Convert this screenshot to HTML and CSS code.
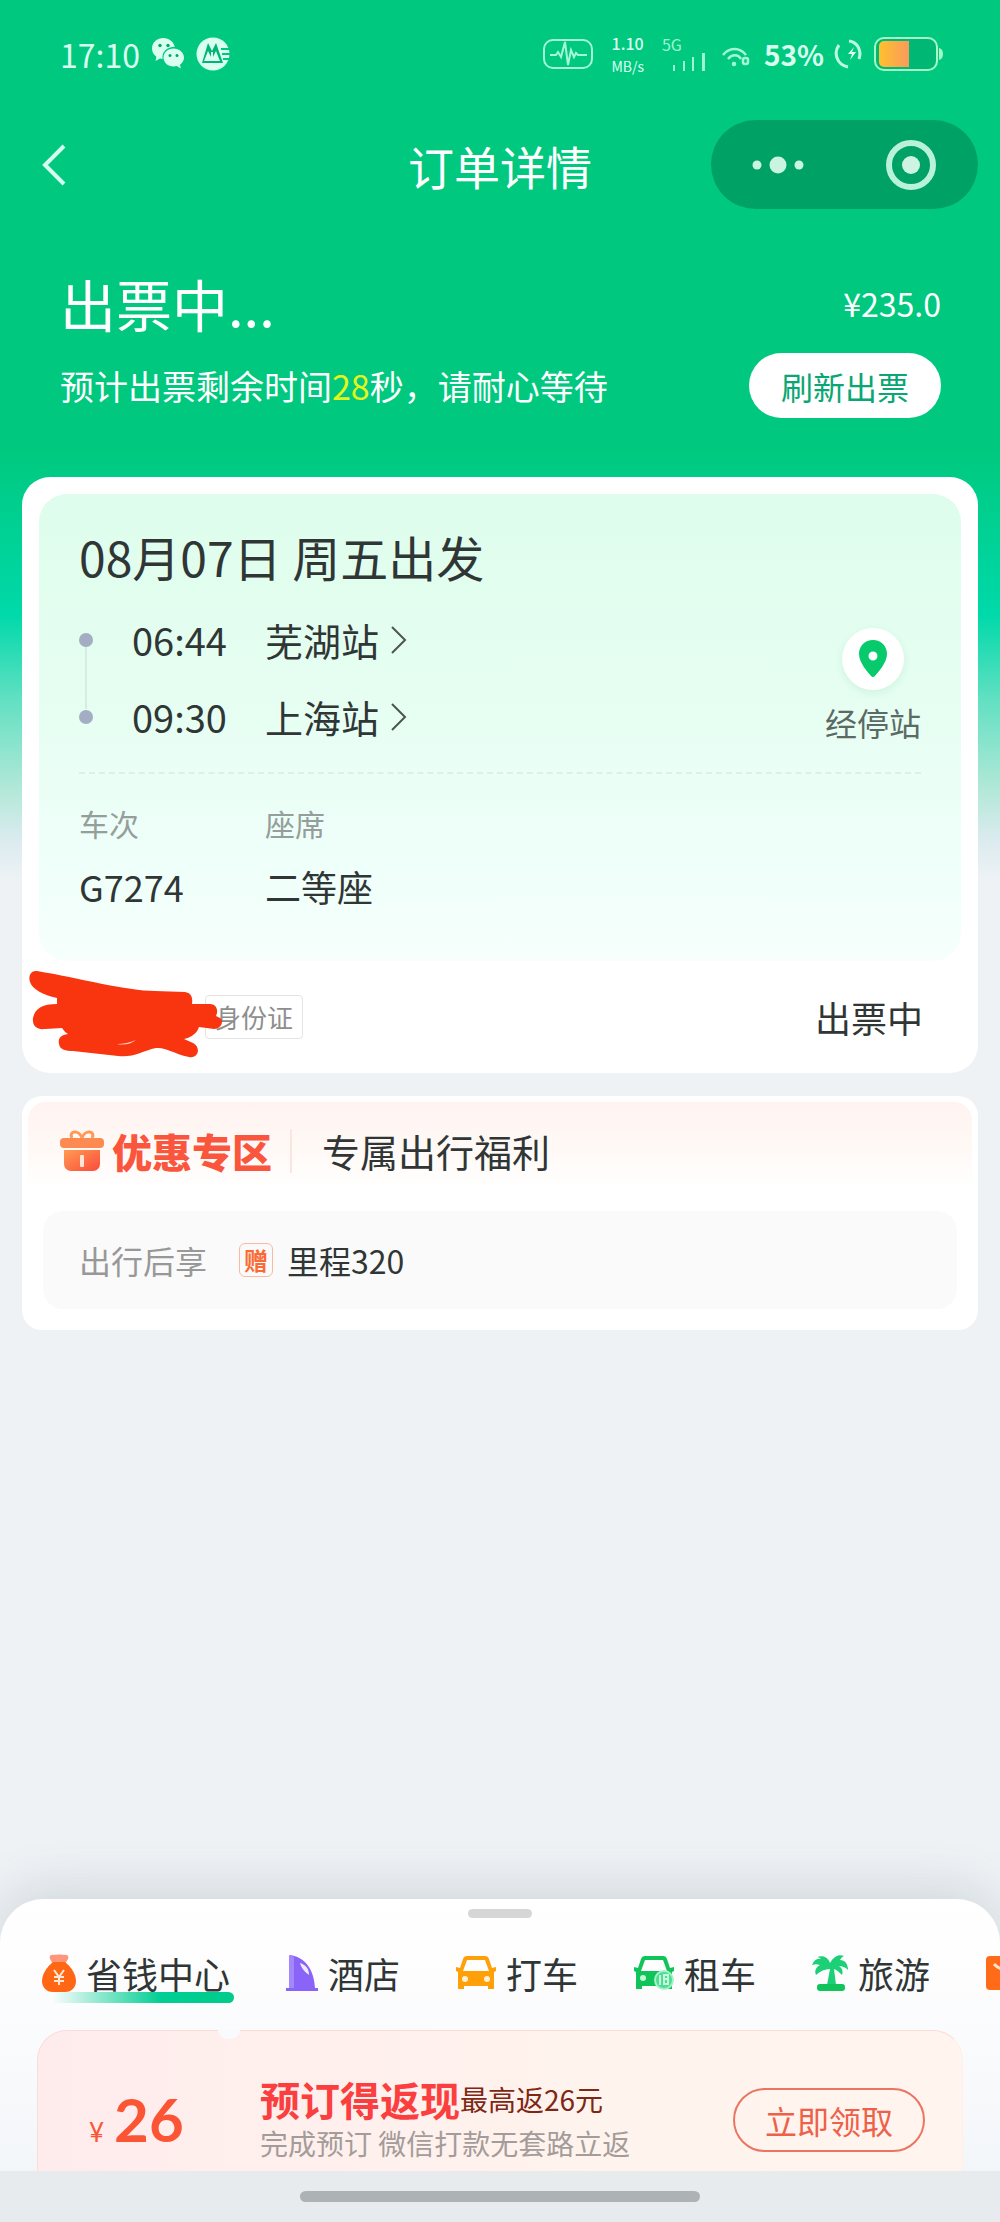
FILE: index.html
```html
<!DOCTYPE html>
<html lang="zh-CN">
<head>
    <meta charset="UTF-8">
    <meta name="viewport" content="width=device-width, initial-scale=1.0">
    <title>订单详情</title>
    <link rel="stylesheet" href="styles.css">
</head>
<body>
    <div class="status-bar">
        <span class="status-time">17:10</span>
        <svg class="status-app" width="34" height="34" viewBox="0 0 34 34">
            <path fill="#d9fff0" d="M12.500 1C6 1 1 5.500 1 11.500c0 3.500 1.700 6.300 4.400 8.200L4.500 24l4.600-2.400c.8.200 1.600.3 2.500.4C10.500 15 16 9.800 23.800 9.800 22.500 4.500 18 1 12.500 1z"/>
            <path fill="#d9fff0" d="M22.500 11.500c-5.700 0-10 4-10 9s4.300 9 10 9c1.200 0 2.300-.2 3.300-.5l4 2.500-.8-3.800c2.400-1.700 4-4.200 4-7.200 0-5-4.800-9-10.500-9z"/>
            <g fill="#00a868"><circle cx="9" cy="8.500" r="1.700"/><circle cx="17" cy="8.500" r="1.700"/><circle cx="19" cy="18.500" r="1.500"/><circle cx="26" cy="18.500" r="1.500"/></g>
        </svg>
        <svg class="status-app" width="34" height="34" viewBox="0 0 34 34">
            <circle cx="17" cy="17" r="16.500" fill="#d9fff0"/>
            <path fill="#00b474" d="M12 6l4 8 4-8 7 20H6z"/>
            <path fill="#d9fff0" d="M12 14l4 8 4-8 4 10H8z"/>
            <path fill="none" stroke="#d9fff0" stroke-width="2" d="M16 15v9"/>
            <path fill="none" stroke="#00c77e" stroke-width="2" d="M25 12h9M26 17h8M27 22h7"/>
        </svg>
        <div class="status-right">
            <svg width="50" height="30" viewBox="0 0 50 30" fill="none" stroke="#a5f8d4" stroke-width="2">
                <rect x="1" y="1" width="48" height="28" rx="9"/>
                <path d="M7 16h6l2-3 3 5 4-15 3 23 3-15 3 7 2-4 2 2h9"/>
            </svg>
            <div class="net-speed"><b>1.10</b><span>MB/s</span></div>
            <div class="signal">
                <span>5G</span>
                <svg width="34" height="20" viewBox="0 0 34 20" fill="#9ff5cf">
                    <rect x="1" y="13" width="2" height="6"/><rect x="11" y="9" width="2" height="10"/><rect x="20" y="5" width="2" height="14"/><rect x="30" y="1" width="3" height="18"/>
                </svg>
            </div>
            <svg class="wifi" width="28" height="20" viewBox="0 0 28 20" fill="none" stroke="#a5f8d4" stroke-width="2.500">
                <path d="M1 8C7 0 18 0 24 8M6 12c4-5 10-5 13 0"/>
                <circle cx="12" cy="17" r="1"/><rect x="21" y="11" width="5" height="6" rx="2"/>
            </svg>
            <b class="battery-text">53%</b>
            <svg width="30" height="30" viewBox="0 0 30 30" fill="none" stroke="#bdfbe0" stroke-width="3">
                <path d="M15 2c8 1 13 9 10 18" /><path d="M5 6C-1 14 3 26 14 28"/>
                <path d="M20 8l-6 7h4l-2 6 6-8h-4z" fill="#e2fff3" stroke="none"/>
            </svg>
            <svg width="70" height="34" viewBox="0 0 70 34">
                <defs>
                    <linearGradient id="charge"><stop offset="0" stop-color="#ffc02e"/><stop offset="1" stop-color="#f99a5c"/></linearGradient>
                </defs>
                <rect x="1" y="1" width="62" height="32" rx="9" fill="#00b873" stroke="#a5f8c8" stroke-width="2"/>
                <path d="M10 4h25v26H10a5 5 0 0 1-5-5V9a5 5 0 0 1 5-5z" fill="url(#charge)"/>
                <path d="M65 11q4 1 4 6t-4 6z" fill="#a5f8c8"/>
            </svg>
        </div>
    </div>

    <header class="nav">
        <a href="#" class="back" aria-label="返回">
            <svg width="24" height="42" viewBox="0 0 24 42" fill="none" stroke="#d5fff0" stroke-width="4"><path d="M22 2L3 21l19 19"/></svg>
        </a>
        <h1>订单详情</h1>
        <div class="capsule">
            <button type="button" aria-label="更多">
                <svg width="52" height="18" viewBox="0 0 52 18" fill="#c8f4e0"><circle cx="5" cy="9" r="4.500"/><circle cx="26" cy="9" r="8.500"/><circle cx="47" cy="9" r="4.500"/></svg>
            </button>
            <button type="button" aria-label="关闭">
                <svg width="50" height="50" viewBox="0 0 50 50"><circle cx="25" cy="25" r="22" fill="none" stroke="#b9f2da" stroke-width="6"/><circle cx="25" cy="25" r="9" fill="#cdf3e3"/></svg>
            </button>
        </div>
    </header>

    <section class="hero">
        <div class="hero-row">
            <h2>出票中...</h2>
            <span class="price">¥235.0</span>
        </div>
        <div class="hero-row">
            <p>预计出票剩余时间<em>28</em>秒，请耐心等待</p>
            <button type="button" class="refresh">刷新出票</button>
        </div>
    </section>

    <main>
        <section class="card ticket">
            <div class="trip">
                <h3>08月07日 周五出发</h3>
                <div class="route">
                    <ul class="stops">
                        <li><time>06:44</time><a href="#">芜湖站<svg width="16" height="28" viewBox="0 0 16 28"><path d="M1 1l13 13L1 27"/></svg></a></li>
                        <li><time>09:30</time><a href="#">上海站<svg width="16" height="28" viewBox="0 0 16 28"><path d="M1 1l13 13L1 27"/></svg></a></li>
                    </ul>
                    <a href="#" class="via">
                        <span class="via-icon">
                            <svg width="30" height="38" viewBox="0 0 30 38"><path fill="#06ca6b" fill-rule="evenodd" d="M15 0C7 0 1 6 1 14c0 9 9 18 12 22q2 2 4 0c3-4 12-13 12-22C29 6 23 0 15 0zm0 11.500a4.500 4.500 0 1 1 0 9 4.500 4.500 0 0 1 0-9z"/></svg>
                        </span>
                        经停站
                    </a>
                </div>
                <dl class="train">
                    <div><dt>车次</dt><dd>G7274</dd></div>
                    <div><dt>座席</dt><dd>二等座</dd></div>
                </dl>
            </div>
            <div class="passenger">
                <span class="id-tag">身份证</span>
                <svg class="scribble" width="196" height="90" viewBox="0 0 196 90">
                    <path fill="#f93510" d="M8 1C2 0-1 6 1 12c2 7 13 13 27 16v6C14 34 6 38 4 48c-1 8 4 12 12 11l17-1c2 3 4 5 6 6-8 1-10 5-9 10 1 6 7 7 14 7l45 5c15 2 24-5 38-8 10-1 16 5 33 9 10 2 12-10 4-14l-9-4c8-2 13-6 15-12l15 2c8 0 10-9 6-11l-4-2c3-6 0-12-6-12h-18c1-7-1-11-7-12l-30-1C98 21 50 8 8 1z"/>
                    <path fill="#ffd9cf" d="M88 74q10 0 19-4-8 6-19 4z"/>
                </svg>
                <span class="passenger-state">出票中</span>
            </div>
        </section>

        <section class="card benefits">
            <div class="benefits-head">
                <svg width="44" height="42" viewBox="0 0 44 42">
                    <defs>
                        <linearGradient id="gift" x1="0" y1="0" x2="1" y2="1"><stop offset="0" stop-color="#ff9c52"/><stop offset="1" stop-color="#fb4a3c"/></linearGradient>
                    </defs>
                    <path d="M12 8C8 1 19-1 22 8 25-1 36 1 32 8" fill="none" stroke="#ff9958" stroke-width="3"/>
                    <rect x="0" y="8" width="44" height="10" rx="4" fill="#fd8a50"/>
                    <path d="M4 20h36v14a7 7 0 0 1-7 7H11a7 7 0 0 1-7-7z" fill="url(#gift)"/>
                    <rect x="20" y="25" width="4" height="12" rx="1" fill="#ffe6d9"/>
                </svg>
                <h3>优惠专区</h3>
                <p>专属出行福利</p>
            </div>
            <div class="benefit">
                <span class="when">出行后享</span>
                <span class="gift-tag">赠</span>
                <span>里程320</span>
            </div>
        </section>
    </main>

    <section class="sheet">
        <div class="grabber"></div>
        <nav class="tabs">
            <a href="#" class="active">
                <svg width="34" height="38" viewBox="0 0 34 38">
                    <path fill="#ff9579" d="M9 1q8-1 16 0 2 1 1 4l-3 5H11L8 5q-1-3 1-4z"/>
                    <path fill="#ff6714" d="M11 8h12c6 5 11 12 11 19 0 6-4 11-11 11H11C4 38 0 33 0 27 0 20 5 13 11 8z"/>
                    <path fill="none" stroke="#ffe9d6" stroke-width="2" d="M12 16l5 7 5-7M17 23v8M12 23h10M12 27h10"/>
                </svg>
                省钱中心
            </a>
            <a href="#">
                <svg width="32" height="36" viewBox="0 0 32 36">
                    <path fill="#8a63f8" d="M4 0c14 2 24 13 25 33h3v3H0v-3h4z"/><path fill="#a288fc" d="M3 0l5 2v31H3z"/>
                    <path fill="#f1ebff" d="M14 8c6 2 9 6 9 12-3-2-8-7-9-12z"/>
                </svg>
                酒店
            </a>
            <a href="#">
                <svg width="40" height="34" viewBox="0 0 40 34">
                    <path fill="#ffa008" fill-rule="evenodd" d="M11 0h18q3 0 4 3l3 9 4-1v4l-2 1v17h-6v-3H8v3H2V16l-2-1v-4l4 1 3-9q1-3 4-3zm0 4L7 15h26L29 4z"/>
                    <circle cx="9" cy="23" r="3" fill="#fff1d6"/><circle cx="31" cy="23" r="3" fill="#fff1d6"/>
                </svg>
                打车
            </a>
            <a href="#">
                <svg width="40" height="34" viewBox="0 0 40 34">
                    <path fill="#10c45a" fill-rule="evenodd" d="M11 0h18q3 0 4 3l3 9 4-1v4l-2 1v17h-6v-3H8v3H2V16l-2-1v-4l4 1 3-9q1-3 4-3zm0 4L7 15h26L29 4z"/>
                    <circle cx="9" cy="22" r="3" fill="#c9f7da"/>
                    <circle cx="30" cy="24" r="9" fill="#4fdc93" stroke="#a6f1c9" stroke-width="2"/>
                    <path fill="none" stroke="#c4f9db" stroke-width="2" d="M26 19v10M30 19h4v9h-4zM30 23h4"/>
                </svg>
                租车
            </a>
            <a href="#">
                <svg width="36" height="36" viewBox="0 0 36 36">
                    <path fill="#1bd077" d="M18 8C22 1 27-1 32 1c-2 1-3 2-4 4 5 0 8 4 8 10-3-3-6-4-9-4 4 3 4 6 3 9-3-3-5-5-8-6l2 16h-9l3-16C13 14 8 16 4 20 2 16 4 12 8 10c-3-1-5-1-8 0 2-5 5-7 9-6-1-1-2-2-4-2 6-2 11 0 13 6z"/>
                    <rect x="5" y="29" width="28" height="7" rx="3" fill="#0fc45b"/>
                </svg>
                旅游
            </a>
            <a href="#" aria-label="更多服务">
                <svg width="36" height="34" viewBox="0 0 36 34"><rect width="36" height="34" rx="4" fill="#ff6b16"/><path d="M8 8q9 10 20 0" fill="none" stroke="#ffe2cf" stroke-width="3"/><circle cx="22" cy="25" r="7" fill="#ff9c62"/></svg>
            </a>
        </nav>
        <div class="coupon">
            <div class="amount"><small>¥</small><b>26</b></div>
            <div class="coupon-text">
                <h3>预订得返现<small>最高返26元</small></h3>
                <p>完成预订 微信打款无套路立返</p>
            </div>
            <button type="button" class="claim">立即领取</button>
        </div>
    </section>
    <footer class="home-bar"><span></span></footer>
</body>
</html>
```
FILE: styles.css
```css
* {
    box-sizing: border-box;
}

body {
    margin: 0;
    min-height: 100vh;
    display: flex;
    flex-direction: column;
    overflow-x: hidden;
    font-family: "Noto Sans CJK SC", sans-serif;
    color: #2f3635;
    background: #eef2f5 linear-gradient(#00c97f 0, #00c97f 450px, #00d9aa 615px, #62e0c2 700px, #b3e8d8 790px, #dbebef 840px, #eef2f5 880px) no-repeat;
}

h1, h2, h3, p, ul, dl, dd {
    margin: 0;
    padding: 0;
    font-weight: 400;
}

a {
    color: inherit;
    text-decoration: none;
}

button {
    font-family: inherit;
    border: none;
    padding: 0;
    cursor: pointer;
}

svg {
    display: block;
    flex-shrink: 0;
}

/* status bar */
.status-bar {
    display: flex;
    align-items: center;
    height: 108px;
    padding: 0 56px 0 60px;
    color: #d9fff0;
}

.status-time {
    font-size: 32px;
    line-height: 40px;
}

.status-app {
    margin-left: 11px;
}

.status-right {
    display: flex;
    align-items: center;
    gap: 10px;
    margin-left: auto;
}

.net-speed {
    display: flex;
    flex-direction: column;
    align-items: center;
    gap: 4px;
    font-size: 14px;
    line-height: 18px;
    padding: 0 8px;
}

.net-speed b {
    font-size: 16px;
    line-height: 20px;
    font-weight: 500;
}

.signal {
    display: flex;
    flex-direction: column;
    font-size: 16px;
    line-height: 16px;
    color: #9ff5cf;
}

.signal svg {
    margin-left: 10px;
}

.wifi {
    margin: 6px 4px 0 6px;
}

.battery-text {
    font-size: 28px;
    line-height: 40px;
}

/* title bar */
.nav {
    display: grid;
    grid-template-columns: 1fr auto 1fr;
    align-items: center;
    margin-top: 12px;
    padding: 0 22px;
}

.nav h1 {
    font-size: 46px;
    line-height: 60px;
    color: #fff;
}

.back {
    justify-self: start;
    padding: 0 20px;
}

.capsule {
    justify-self: end;
    display: flex;
    align-items: center;
    width: 267px;
    height: 89px;
    border-radius: 45px;
    background: #00a165;
}

.capsule button {
    flex: 1;
    height: 100%;
    display: flex;
    align-items: center;
    justify-content: center;
    background: none;
}

/* order state */
.hero {
    display: flex;
    flex-direction: column;
    gap: 20px;
    padding: 64px 59px 59px 60px;
    color: #fff;
}

.hero-row {
    display: flex;
    align-items: center;
    justify-content: space-between;
}

.hero h2 {
    font-size: 56px;
    line-height: 60px;
}

.price {
    font-size: 32px;
}

.hero p {
    font-size: 34px;
    line-height: 44px;
}

.hero em {
    font-style: normal;
    color: #e3f51b;
}

.refresh {
    width: 192px;
    height: 65px;
    border-radius: 33px;
    background: #fff;
    color: #0aa673;
    font-size: 32px;
}

/* cards */
main {
    display: flex;
    flex-direction: column;
    gap: 23px;
    padding: 0 22px;
}

.card {
    background: #fff;
    border-radius: 28px;
}

.ticket {
    padding: 17px 17px 0;
}

.trip {
    padding: 34px 40px 53px;
    border-radius: 28px;
    background: linear-gradient(#defdec, #e5fef1 40%, #effffa 80%, #f6fffc);
}

.trip h3 {
    font-size: 48px;
    line-height: 56px;
}

.route {
    display: flex;
    align-items: flex-end;
    justify-content: space-between;
    margin-top: 17px;
    padding-bottom: 17px;
    border-bottom: 2px dashed #dcf0e8;
}

.stops {
    list-style: none;
}

.stops li {
    display: grid;
    grid-template-columns: 53px 133px auto;
    align-items: center;
    height: 77px;
    font-size: 38px;
    position: relative;
}

.stops li::before {
    content: "";
    width: 14px;
    height: 14px;
    border-radius: 50%;
    background: #a3adc4;
}

.stops li:first-child::after {
    content: "";
    position: absolute;
    left: 6px;
    top: 46px;
    width: 2px;
    height: 62px;
    background: #d5ebe3;
}

.stops a {
    display: flex;
    align-items: center;
    gap: 12px;
}

.stops path {
    fill: none;
    stroke: #4b5553;
    stroke-width: 2;
}

.via {
    display: flex;
    flex-direction: column;
    align-items: center;
    gap: 12px;
    padding-bottom: 13px;
    font-size: 32px;
    line-height: 40px;
    color: #5b6a65;
}

.via-icon {
    width: 62px;
    height: 62px;
    display: flex;
    align-items: center;
    justify-content: center;
    border-radius: 50%;
    background: #fff;
    box-shadow: 0 3px 8px rgba(0, 150, 90, 0.1);
}

.train {
    display: flex;
    margin-top: 29px;
}

.train div {
    width: 186px;
}

.train dt {
    font-size: 30px;
    line-height: 40px;
    color: #969e9b;
}

.train dd {
    margin-top: 21px;
    font-size: 36px;
    line-height: 44px;
}

.passenger {
    position: relative;
    display: flex;
    align-items: center;
    justify-content: space-between;
    height: 112px;
    padding: 0 38px 0 166px;
    font-size: 36px;
}

.id-tag {
    padding: 0 9px;
    border: 1px solid #e4e4e4;
    border-radius: 4px;
    font-size: 26px;
    line-height: 42px;
    color: #8e8e8e;
}

/* marker strokes over the passenger name */
.scribble {
    position: absolute;
    left: -10px;
    top: 9px;
}

.benefits {
    padding: 6px 6px 21px;
    border-radius: 20px;
}

.benefits-head {
    display: flex;
    align-items: center;
    gap: 8px;
    height: 109px;
    padding: 0 32px 12px;
    border-radius: 18px 18px 0 0;
    background: linear-gradient(#fff3f0, #fffaf7 50%, #fff 80%);
}

.benefits-head h3 {
    font-size: 40px;
    font-weight: 900;
    line-height: 44px;
    color: #fa563d;
    padding-right: 18px;
    border-right: 2px solid #fbe5df;
}

.benefits-head p {
    font-size: 38px;
    margin-left: 22px;
}

.benefit {
    display: flex;
    align-items: center;
    height: 98px;
    margin: 0 15px;
    padding: 0 36px;
    border-radius: 20px;
    background: #fafafa;
    font-size: 32px;
}

.when {
    color: #989898;
}

.gift-tag {
    width: 34px;
    height: 34px;
    margin: 0 14px 0 32px;
    border: 1px solid #fbb9a2;
    border-radius: 6px;
    font-size: 24px;
    font-weight: 700;
    line-height: 32px;
    text-align: center;
    color: #fb6a35;
}

/* bottom sheet */
.sheet {
    margin-top: auto;
    padding: 10px 37px 0;
    border-radius: 44px 44px 0 0;
    background: linear-gradient(#fff, #fdfdfe 30%, #f3f6f9);
    box-shadow: 0 -10px 50px rgba(90, 105, 115, 0.2);
}

.grabber {
    width: 64px;
    height: 9px;
    margin: 0 auto;
    border-radius: 5px;
    background: #d6d6d6;
}

.tabs {
    display: flex;
    gap: 56px;
    height: 112px;
    margin-right: -37px;
    padding: 31px 0 0 5px;
    overflow: hidden;
}

.tabs a {
    position: relative;
    z-index: 0;
    display: flex;
    align-items: center;
    gap: 10px;
    height: 48px;
    font-size: 36px;
    line-height: 48px;
    white-space: nowrap;
    flex-shrink: 0;
}

.tabs .active::after {
    content: "";
    position: absolute;
    z-index: -1;
    left: 10px;
    right: -4px;
    bottom: -6px;
    height: 11px;
    border-radius: 6px;
    background: linear-gradient(90deg, rgba(0, 205, 145, 0), #00ce93 60%, #00cb8b);
}

.coupon {
    position: relative;
    display: grid;
    grid-template-columns: 171px 1fr auto;
    align-items: start;
    height: 141px;
    padding: 46px 37px 0 51px;
    border: 1px solid #fcdcd8;
    border-right-color: #fff0e6;
    border-bottom: none;
    border-radius: 30px 30px 0 0;
    background: linear-gradient(90deg, #feecec, #fff3ed 60%, #fff4ee);
}

/* ticket notch */
.coupon::before {
    content: "";
    position: absolute;
    left: 180px;
    top: -1px;
    width: 22px;
    height: 9px;
    border-radius: 0 0 11px 11px;
    background: #f8fafc;
}

.amount {
    display: flex;
    align-items: baseline;
    gap: 10px;
    font-family: Lato, sans-serif;
    line-height: 84px;
    color: #fb5536;
}

.amount small {
    font-size: 26px;
}

.amount b {
    font-size: 60px;
}

.coupon-text {
    white-space: nowrap;
}

.coupon-text h3 {
    display: flex;
    align-items: center;
    font-size: 40px;
    font-weight: 700;
    line-height: 44px;
    color: #fb3f40;
}

.coupon-text h3 small {
    font-size: 28px;
    font-weight: 400;
    color: #7d2714;
}

.coupon-text p {
    font-size: 28px;
    line-height: 44px;
    color: #a39c9a;
}

.claim {
    width: 192px;
    height: 64px;
    margin-top: 11px;
    border: 2px solid #ea7561;
    border-radius: 32px;
    background: none;
    color: #ee6148;
    font-size: 32px;
}

/* system home bar */
.home-bar {
    display: flex;
    align-items: center;
    justify-content: center;
    height: 51px;
    background: #e7ebed;
}

.home-bar span {
    width: 40%;
    height: 11px;
    border-radius: 6px;
    background: #adb2b5;
}
```
